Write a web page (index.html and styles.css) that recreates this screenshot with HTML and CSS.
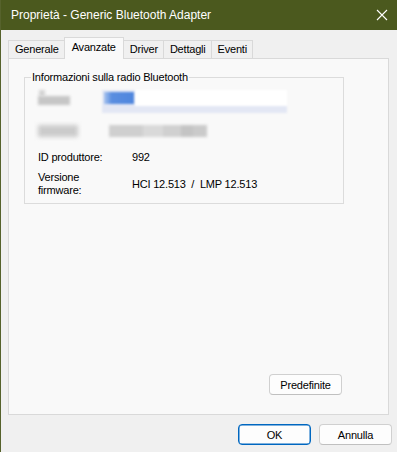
FILE: index.html
```html
<!DOCTYPE html>
<html lang="it">
<head>
<meta charset="utf-8">
<title>Proprietà - Generic Bluetooth Adapter</title>
<link rel="stylesheet" href="styles.css">
</head>
<body>
<div class="window">
  <div class="titlebar">
    <span class="title">Proprietà - Generic Bluetooth Adapter</span>
    <svg class="close" width="12" height="12" viewBox="0 0 12 12"><path d="M1 1 L11 11 M11 1 L1 11" stroke="#ffffff" stroke-width="1.1" fill="none"/></svg>
  </div>
  <div class="body">
    <div class="tabs">
      <div class="tab">Generale</div>
      <div class="tab active">Avanzate</div>
      <div class="tab">Driver</div>
      <div class="tab">Dettagli</div>
      <div class="tab">Eventi</div>
    </div>
    <div class="panel">
      <fieldset class="group">
        <legend>Informazioni sulla radio Bluetooth</legend>
        <div class="rows">
          <div class="row row1">
            <div class="blur-label1"><span class="tick"></span><span class="bar"></span></div>
            <div class="blur-field">
              <span class="sel"></span><span class="white"></span>
            </div>
          </div>
          <div class="row row2">
            <div class="blur-label2"></div>
            <div class="blur-value2">
              <span class="g1"></span><span class="g2"></span><span class="g3"></span><span class="g4"></span><span class="g5"></span>
            </div>
          </div>
          <div class="row row3">
            <div class="label">ID produttore:</div>
            <div class="value">992</div>
          </div>
          <div class="row row4">
            <div class="label">Versione<br>firmware:</div>
            <div class="value">HCI 12.513&nbsp; /&nbsp; LMP 12.513</div>
          </div>
        </div>
      </fieldset>
      <button class="btn defaults">Predefinite</button>
    </div>
    <div class="footer">
      <button class="btn ok">OK</button>
      <button class="btn">Annulla</button>
    </div>
  </div>
</div>
</body>
</html>
```

FILE: styles.css
```css
html, body {
  margin: 0;
  padding: 0;
}
body {
  font-family: "Liberation Sans", Arial, sans-serif;
  font-size: 11px;
  letter-spacing: -0.2px;
  color: #000;
  background: #f0f0f0;
}
.window {
  width: 397px;
  height: 452px;
  box-sizing: border-box;
  display: flex;
  flex-direction: column;
  background: #f0f0f0;
  border-left: 1px solid #56622c;
  overflow: hidden;
}
.titlebar {
  height: 30px;
  flex: none;
  background: #4b591e;
  display: flex;
  align-items: center;
  padding: 0 7px 0 10px;
  color: #fff;
}
.title {
  flex: 1;
  font-size: 12px;
  letter-spacing: 0;
}
.close {
  display: block;
  margin-right: 2px;
}
.body {
  flex: 1;
  display: flex;
  flex-direction: column;
  padding-top: 7px;
}
.tabs {
  display: flex;
  align-items: flex-end;
  margin-left: 7px;
  height: 21px;
  position: relative;
  z-index: 1;
}
.tab {
  height: 18px;
  box-sizing: border-box;
  padding: 0 5px 0 6px;
  line-height: 17px;
  border: 1px solid #d9d9d9;
  border-bottom: none;
  border-left: none;
  background: #f0f0f0;
}
.tab:first-child {
  border-left: 1px solid #d9d9d9;
  padding-left: 6px;
}
.tab.active {
  height: 22px;
  margin-bottom: -1px;
  background: #f9f9f9;
  line-height: 19px;
  padding: 0 7px 0 7px;
  margin-left: -1px;
  border-left: 1px solid #d9d9d9;
}
.panel {
  margin: 0 8px 0 7px;
  height: 357px;
  box-sizing: border-box;
  background: #f9f9f9;
  border: 1px solid #d9d9d9;
  display: flex;
  flex-direction: column;
}
.group {
  margin: 11px 0 0 15px;
  width: 320px;
  height: 134px;
  box-sizing: border-box;
  padding: 0;
  border: 1px solid #dcdcdc;
  min-inline-size: 0;
}
.group legend {
  margin-left: 6px;
  padding: 0 1px;
  line-height: 14px;
}
.rows {
  padding: 6px 0 0 13px;
  display: flex;
  flex-direction: column;
}
.row {
  display: flex;
}
.label {
  width: 94px;
  flex: none;
  line-height: 13px;
}
.row1 {
  height: 24px;
  position: relative;
}
.blur-label1 {
  width: 64px;
  flex: none;
  position: relative;
}
.blur-label1 .tick {
  position: absolute;
  left: 1px;
  top: 0;
  width: 6px;
  height: 6px;
  background: #d4d4d4;
  filter: blur(1.5px);
}
.blur-label1 .bar {
  position: absolute;
  left: 0;
  top: 6px;
  width: 32px;
  height: 9px;
  background: #c6c6c6;
  filter: blur(1.8px);
}
.blur-field {
  width: 185px;
  height: 23px;
  position: relative;
  background: #e3e7f4;
  filter: blur(1.2px);
}
.blur-field .sel {
  position: absolute;
  left: 2px;
  top: 2px;
  width: 30px;
  height: 12px;
  background: linear-gradient(90deg, #a9c4ef 0, #5a8ee0 25%, #4f86de 100%);
}
.blur-field .white {
  position: absolute;
  left: 33px;
  top: 0;
  width: 152px;
  height: 16px;
  background: #ffffff;
}
.row2 {
  height: 28px;
  margin-top: 11px;
}
.blur-label2 {
  width: 40px;
  height: 12px;
  margin-right: 31px;
  flex: none;
  background: #cbcbcb;
  filter: blur(2px);
}
.blur-value2 {
  display: flex;
  height: 12px;
  filter: blur(1.6px);
}
.blur-value2 span {
  display: block;
  height: 12px;
}
.g1 { width: 34px; background: #cfcfcf; }
.g2 { width: 20px; background: #d9d9d9; }
.g3 { width: 18px; background: #d0d0d0; }
.g4 { width: 12px; background: #c4c4c4; }
.g5 { width: 14px; background: #cacaca; }
.row3 {
  height: 20px;
  align-items: center;
  margin-top: -6px;
  line-height: 14px;
}
.row4 {
  margin-top: 4px;
  align-items: center;
}
.btn {
  font-family: inherit;
  font-size: 11px;
  letter-spacing: -0.2px;
  color: #000;
  background: #fdfdfd;
  border: 1px solid #d0d0d0;
  border-bottom-color: #c0c0c0;
  border-radius: 4px;
  width: 73px;
  height: 21px;
  padding: 0;
  line-height: 18px;
}
.defaults {
  margin-top: auto;
  align-self: flex-end;
  margin-right: 46px;
  margin-bottom: 19px;
}
.footer {
  display: flex;
  justify-content: flex-end;
  gap: 8px;
  padding: 9px 5px 0 0;
}
.btn.ok {
  border: 1px solid #0067c0;
  box-shadow: inset 0 0 0 0.5px #0067c0;
}
```
